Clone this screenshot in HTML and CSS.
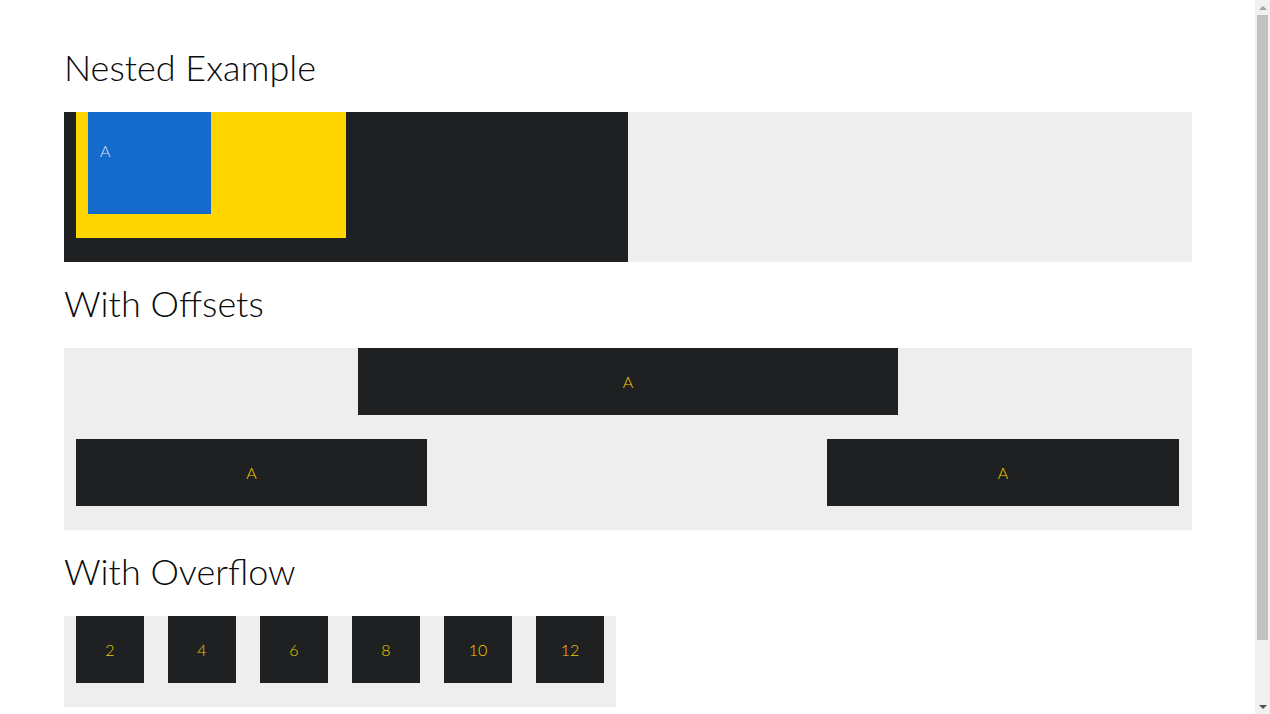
FILE: index.html
```html
<!DOCTYPE html>
<html>
<head>
<meta charset="utf-8">
<link rel="stylesheet" href="styles.css">
</head>
<body>
  <h2 class="title">Nested Example</h2>
  <div class="panel nested">
    <div class="dark-half">
      <div class="yellow-box">
        <div class="blue-box">A</div>
      </div>
    </div>
  </div>

  <h2 class="title">With Offsets</h2>
  <div class="panel offsets">
    <div class="row row-top">
      <div class="box box-wide">A</div>
    </div>
    <div class="row row-bottom">
      <div class="box box-left">A</div>
      <div class="box box-right">A</div>
    </div>
  </div>

  <h2 class="title">With Overflow</h2>
  <div class="panel overflow">
    <div class="box box-sq">2</div>
    <div class="box box-sq">4</div>
    <div class="box box-sq">6</div>
    <div class="box box-sq">8</div>
    <div class="box box-sq">10</div>
    <div class="box box-sq">12</div>
  </div>

  <div class="scrollbar">
    <div class="sb-btn"><span class="arrow-up"></span></div>
    <div class="sb-thumb"></div>
    <div class="sb-rest"></div>
    <div class="sb-btn"><span class="arrow-down"></span></div>
  </div>
</body>
</html>
```

FILE: styles.css
```css
html, body {
  margin: 0;
}
html {
  overflow: hidden;
}
body {
  padding: 27px 78px 74px 64px;
  font-family: "Lato", "Open Sans", sans-serif;
  font-weight: 300;
  color: #000;
  background: #fff;
}
.title {
  margin: 17px 0 21px;
  font-size: 36px;
  line-height: 48px;
  font-weight: 300;
  color: #0a0a0a;
}
.title:first-child {
  margin-top: 16px;
}
.panel {
  background: #eeeeee;
}
.nested {
  display: flex;
  height: 150px;
}
.dark-half {
  width: 50%;
  background: #1f2022;
  display: flex;
  align-items: flex-start;
}
.yellow-box {
  margin-left: 12px;
  width: 270px;
  height: 126px;
  background: #ffd600;
  display: flex;
  align-items: flex-start;
}
.blue-box {
  margin-left: 12px;
  width: 123px;
  height: 102px;
  box-sizing: border-box;
  padding: 27px 12px 0;
  background: #156bcb;
  color: rgba(255, 255, 255, 0.85);
  font-size: 16px;
  line-height: 24px;
}
.box {
  background: #1f2022;
  color: #f2cc00;
  font-size: 16px;
  display: flex;
  align-items: center;
  justify-content: center;
  height: 67px;
}
.offsets {
  padding: 0 13px 24px 12px;
  display: flex;
  flex-direction: column;
  gap: 24px;
}
.row {
  display: flex;
}
.row-top {
  padding-left: 282px;
}
.box-wide {
  width: 540px;
}
.row-bottom {
  justify-content: space-between;
}
.box-left {
  width: 351px;
}
.box-right {
  width: 352px;
}
.overflow {
  width: 552px;
  box-sizing: border-box;
  padding: 0 12px 24px;
  display: flex;
  gap: 24px;
}
.box-sq {
  width: 68px;
}

/* fake classic scrollbar */
.scrollbar {
  position: fixed;
  top: 0;
  right: 0;
  width: 15px;
  height: 100vh;
  background: #f1f1f1;
  display: flex;
  flex-direction: column;
}
.sb-btn {
  height: 15px;
  flex: none;
  display: flex;
  align-items: center;
  justify-content: center;
}
.arrow-up {
  width: 0;
  height: 0;
  border-left: 4px solid transparent;
  border-right: 4px solid transparent;
  border-bottom: 4px solid #a3a3a3;
}
.arrow-down {
  width: 0;
  height: 0;
  border-left: 4px solid transparent;
  border-right: 4px solid transparent;
  border-top: 4px solid #505050;
}
.sb-thumb {
  height: 625px;
  margin: 0 2px;
  background: #c1c1c1;
  flex: none;
}
.sb-rest {
  flex: 1;
}
```
